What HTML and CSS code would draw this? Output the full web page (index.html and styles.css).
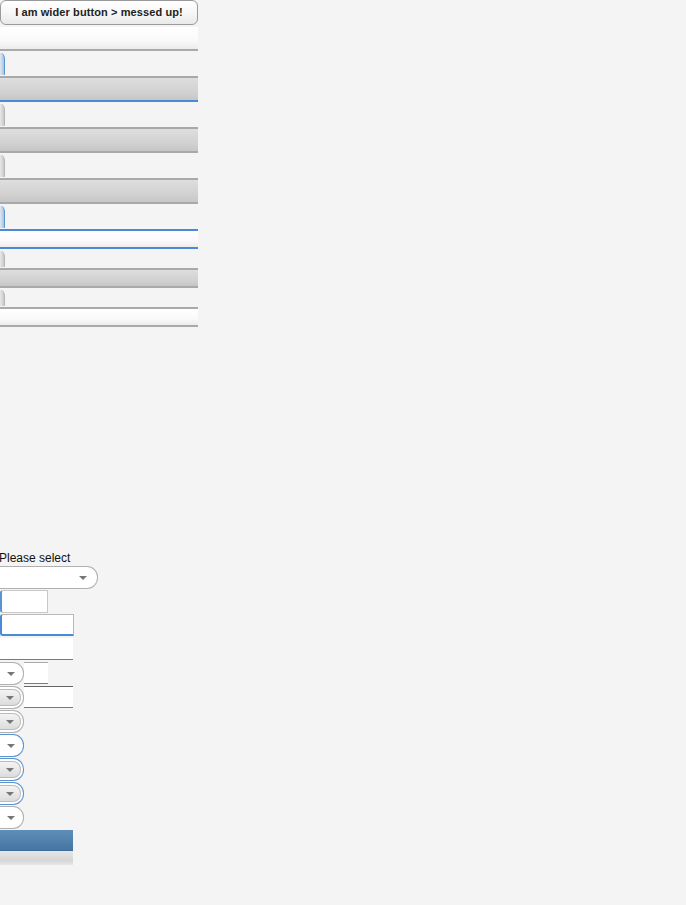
FILE: index.html
```html
<!DOCTYPE html>
<html>
<head>
<meta charset="utf-8">
<link rel="stylesheet" href="styles.css">
</head>
<body>
<div class="top">
  <div class="btn">I am wider button &gt; messed up!</div>
  <div class="bar white"></div>
  <div class="row"><span class="cap blue"></span></div>
  <div class="bar gray blueline"></div>
  <div class="row"><span class="cap"></span></div>
  <div class="bar gray"></div>
  <div class="row"><span class="cap"></span></div>
  <div class="bar gray"></div>
  <div class="row blueline"><span class="cap blue"></span></div>
  <div class="bar white blueline short"></div>
  <div class="row short"><span class="cap"></span></div>
  <div class="bar gray short"></div>
  <div class="row short"><span class="cap"></span></div>
  <div class="bar white short"></div>
</div>

<div class="bottom">
  <div class="label">Please select</div>
  <div class="line"><div class="sel wide"><span class="arrow"></span></div></div>
  <div class="line"><div class="inp bl"></div></div>
  <div class="line"><div class="inp bl2"></div></div>
  <div class="line"><div class="inp w73 bb"></div></div>
  <div class="line">
    <div class="sel small"><span class="arrow"></span></div>
    <div class="inp w24 bt bb"></div>
  </div>
  <div class="line">
    <div class="sel small"><span class="circ"><span class="arrow"></span></span></div>
    <div class="inp w49 btd bb"></div>
  </div>
  <div class="line"><div class="sel small"><span class="circ"><span class="arrow"></span></span></div></div>
  <div class="line"><div class="sel small blueb"><span class="arrow"></span></div></div>
  <div class="line"><div class="sel small blueb"><span class="circ"><span class="arrow"></span></span></div></div>
  <div class="line"><div class="sel small blueb"><span class="circ"><span class="arrow"></span></span></div></div>
  <div class="line"><div class="sel small"><span class="arrow"></span></div></div>
  <div class="bluebar"></div>
  <div class="graybar"></div>
</div>
</body>
</html>
```

FILE: styles.css
```css
html, body {
  margin: 0;
  padding: 0;
  background: #f4f4f4;
  font-family: "Liberation Sans", Arial, sans-serif;
}
.top {
  width: 198px;
  display: flex;
  flex-direction: column;
}
.btn {
  height: 23px;
  border: 1px solid #9a9a9a;
  border-radius: 6px;
  background: linear-gradient(#ffffff, #f7f7f7 50%, #e9e9e9);
  font-size: 11px;
  font-weight: bold;
  color: #222;
  text-align: center;
  line-height: 23px;
  margin-bottom: 2px;
  letter-spacing: 0.1px;
}
.bar {
  height: 22px;
  border-bottom: 2px solid #a9a9a9;
}
.bar.white {
  background: linear-gradient(#ffffff, #fafafa 60%, #ececec);
}
.bar.gray {
  background: linear-gradient(#dedede, #d0d0d0 70%, #c6c6c6);
}
.bar.blueline, .row.blueline {
  border-bottom-color: #4a8ad4;
}
.bar.short { height: 16px; }
.row {
  height: 25px;
  border-bottom: 2px solid #a9a9a9;
  display: flex;
  align-items: stretch;
  background: #f4f4f4;
}
.row.short { height: 19px; }
.cap {
  width: 4px;
  margin: 2px 0 1px;
  background: linear-gradient(90deg, #e8e8e8, #c9c9c9);
  border-right: 1px solid #b5b5b5;
  border-top-right-radius: 4px 6px;
  border-bottom-right-radius: 1px;
}
.cap.blue {
  background: linear-gradient(90deg, #dfe8f2, #a8c3e0);
  border-right-color: #5a93d0;
}
.bottom {
  margin-top: 224px;
  display: flex;
  flex-direction: column;
  align-items: flex-start;
}
.label {
  font-size: 12px;
  color: #111;
  height: 14px;
  line-height: 14px;
  margin-bottom: 1px;
  margin-left: -1px;
}
.line {
  height: 24px;
  display: flex;
  align-items: flex-start;
}
.sel {
  height: 21px;
  background: #fff;
  border: 1px solid #b0b0b0;
  border-left: none;
  border-radius: 0 11px 11px 0;
  display: flex;
  align-items: center;
  justify-content: flex-end;
}
.sel.wide { width: 97px; }
.sel.wide .arrow { margin-right: 10px; }
.sel.small { width: 23px; }
.sel.small > .arrow { margin-right: 8px; }
.sel.blueb { border-color: #5a93d0; }
.arrow {
  width: 0;
  height: 0;
  border-left: 4px solid transparent;
  border-right: 4px solid transparent;
  border-top: 4px solid #777;
}
.circ {
  width: 20px;
  height: 15px;
  border: 1px solid #bbb;
  border-left: none;
  border-radius: 0 8px 8px 0;
  background: linear-gradient(#f4f4f4, #dcdcdc);
  display: flex;
  align-items: center;
  justify-content: center;
  margin-right: 2px;
}
.inp {
  background: #fff;
}
.w73 { width: 73px; height: 22px; }
.w24 { width: 24px; height: 21px; }
.w49 { width: 49px; height: 21px; }
.bl {
  width: 45px;
  height: 21px;
  border: 1px solid #c8c8c8;
  border-left: 2px solid #5a93d0;
  border-radius: 3px 0 0 3px;
}
.bl2 {
  width: 71px;
  height: 19px;
  border: 1px solid #b8b8b8;
  border-left: 2px solid #4a8ad4;
  border-bottom: 2px solid #4a8ad4;
  border-radius: 3px 0 0 3px;
}
.inp.bb { box-shadow: inset 0 -1px 0 #3f87dc; }
.bt { border-top: 1px solid #aaa; height: 21px; }
.btd { border-top: 1px solid #666; }
.bluebar {
  width: 73px;
  height: 20px;
  background: linear-gradient(#5f8eb8, #4575a3);
  border-bottom: 1px solid #3f6d99;
}
.graybar {
  width: 73px;
  height: 14px;
  background: linear-gradient(#e6e6e6, #d6d6d6 70%, #e8e8e8);
}
```
